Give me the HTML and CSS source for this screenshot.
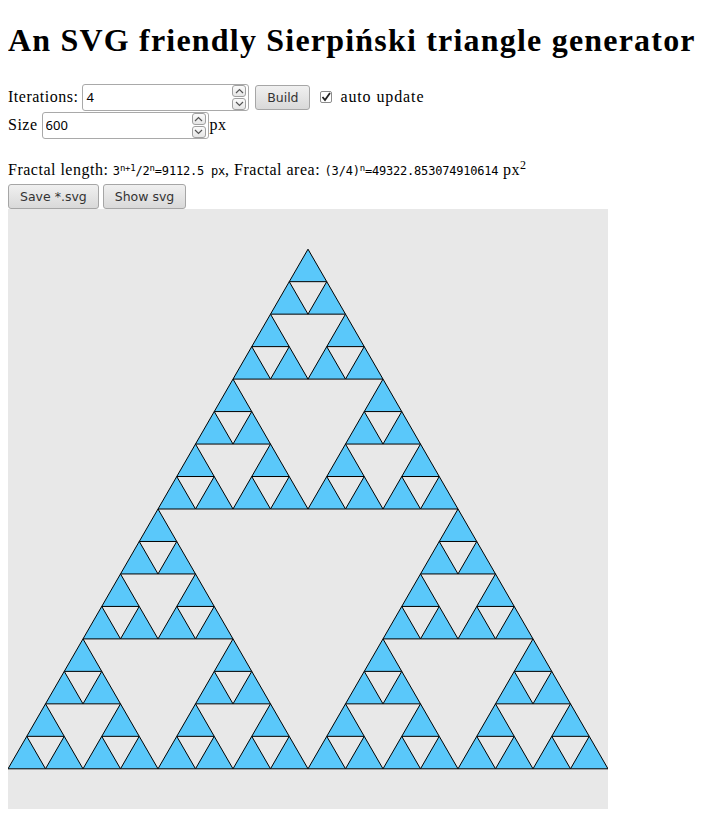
FILE: index.html
```html
<!DOCTYPE html>
<html lang="en">
<head>
<meta charset="utf-8">
<title>Sierpiński triangle generator</title>
<link rel="stylesheet" href="styles.css">
</head>
<body>
<h1 class="title">An SVG friendly Sierpiński triangle generator</h1>
<div class="row">
  <label class="label" for="it">Iterations:</label>
  <span class="numbox numbox-it">
    <input class="num" id="it" type="text" value="4">
    <span class="spin"><span class="spin-btn"><svg width="9" height="6" viewBox="0 0 9 6"><path d="M1 5 L4.5 1.5 L8 5" fill="none" stroke="#555" stroke-width="1.2"/></svg></span><span class="spin-btn"><svg width="9" height="6" viewBox="0 0 9 6"><path d="M1 1 L4.5 4.5 L8 1" fill="none" stroke="#555" stroke-width="1.2"/></svg></span></span>
  </span>
  <button class="btn btn-build" type="button">Build</button>
  <span class="check"><svg width="10" height="10" viewBox="0 0 10 10"><path d="M1.5 5 L4 8 L9 1" fill="none" stroke="#222" stroke-width="1.8"/></svg></span>
  <span class="label label-auto">auto update</span>
</div>
<div class="row">
  <label class="label" for="sz">Size</label>
  <span class="numbox numbox-sz">
    <input class="num" id="sz" type="text" value="600">
    <span class="spin"><span class="spin-btn"><svg width="9" height="6" viewBox="0 0 9 6"><path d="M1 5 L4.5 1.5 L8 5" fill="none" stroke="#555" stroke-width="1.2"/></svg></span><span class="spin-btn"><svg width="9" height="6" viewBox="0 0 9 6"><path d="M1 1 L4.5 4.5 L8 1" fill="none" stroke="#555" stroke-width="1.2"/></svg></span></span>
  </span>
  <span class="label label-px">px</span>
</div>
<p class="info">Fractal length: <code class="code">3<sup class="csup">n+1</sup>/2<sup class="csup">n</sup>=9112.5 px</code>, Fractal area: <code class="code">(3/4)<sup class="csup">n</sup>=49322.853074910614</code> px<sup class="sup">2</sup></p>
<div class="actions">
  <button class="btn" type="button">Save *.svg</button>
  <button class="btn" type="button">Show svg</button>
</div>
<svg class="canvas" id="canvas" width="600" height="600" viewBox="0 0 600 600" xmlns="http://www.w3.org/2000/svg"></svg>
<script src="app.js"></script>
</body>
</html>
```
FILE: styles.css
```css
html, body {
  background: #ffffff;
}
body {
  margin: 8px;
  font-family: "Liberation Serif", "DejaVu Serif", serif;
  font-size: 16px;
  letter-spacing: 0.5px;
  color: #000;
}
.title {
  margin: 12px 0 23px 0;
  font-size: 32px;
  line-height: 40px;
  font-weight: bold;
  letter-spacing: 1.2px;
}
.row {
  display: flex;
  align-items: center;
  height: 28px;
  gap: 4px;
}
.label {
  line-height: 20px;
}
.label-auto {
  letter-spacing: 0.9px;
}
.label-px {
  margin-left: -3px;
}
.numbox {
  display: inline-flex;
  align-items: center;
  box-sizing: border-box;
  height: 27px;
  border: 1px solid #a9a9a9;
  border-radius: 3px;
  background: #fff;
  padding: 0 2px 0 3px;
}
.numbox-it { width: 167px; }
.numbox-sz { width: 167px; }
.num {
  flex: 1;
  min-width: 0;
  border: none;
  outline: none;
  padding: 0;
  margin: 0;
  font-family: "Noto Sans", "DejaVu Sans", sans-serif;
  font-size: 13px;
  letter-spacing: 0;
  color: #000;
  background: transparent;
}
.spin {
  display: flex;
  flex-direction: column;
  gap: 1px;
}
.spin-btn {
  display: flex;
  align-items: center;
  justify-content: center;
  box-sizing: border-box;
  width: 14px;
  height: 12px;
  border: 1px solid #a0a0a0;
  border-radius: 3px;
  background: linear-gradient(#fbfbfb, #e6e6e6);
}
.btn {
  box-sizing: border-box;
  height: 25px;
  padding: 0 11px;
  border: 1px solid #a6a6a6;
  border-radius: 3px;
  background: linear-gradient(#f0f0f0, #d9d9d9);
  font-family: "DejaVu Sans", sans-serif;
  font-size: 12.5px;
  letter-spacing: 0;
  color: #333;
  margin: 0;
}
.btn-build {
  margin-left: 2px;
  width: 55px;
  padding: 0;
}
.check {
  display: inline-flex;
  align-items: center;
  justify-content: center;
  box-sizing: border-box;
  width: 12px;
  height: 12px;
  border: 1px solid #8c8c8c;
  border-radius: 2px;
  background: #fff;
  margin: 0 4px 0 6px;
}
.info {
  margin: 20px 0 0 0;
  height: 22px;
  line-height: 22px;
  white-space: nowrap;
}
.code {
  font-family: "DejaVu Sans Mono", monospace;
  font-size: 12px;
  letter-spacing: -0.2px;
}
.csup {
  font-size: 9px;
  vertical-align: 4px;
  line-height: 0;
}
.sup {
  font-size: 12px;
  vertical-align: 6px;
  line-height: 0;
}
.actions {
  display: flex;
  gap: 4px;
  margin-top: 3px;
}
.canvas {
  display: block;
  background: #e8e8e8;
}
```
FILE: app.js
```js
(function () {
  var svg = document.getElementById('canvas');
  var ns = 'http://www.w3.org/2000/svg';
  var N = 4, S = 600;
  var H = S * Math.sqrt(3) / 2;
  var baseY = (S + H) / 2;
  function tri(x, y, s, n) {
    if (n === 0) {
      var p = document.createElementNS(ns, 'polygon');
      var h = s * Math.sqrt(3) / 2;
      p.setAttribute('points', x + ',' + y + ' ' + (x + s) + ',' + y + ' ' + (x + s / 2) + ',' + (y - h));
      p.setAttribute('fill', '#5ac8fa');
      p.setAttribute('stroke', '#000');
      p.setAttribute('stroke-width', '1');
      svg.appendChild(p);
      return;
    }
    var hs = s / 2, hh = hs * Math.sqrt(3) / 2;
    tri(x, y, hs, n - 1);
    tri(x + hs, y, hs, n - 1);
    tri(x + hs / 2, y - hh, hs, n - 1);
  }
  tri(0, baseY, S, N);
})();
```
